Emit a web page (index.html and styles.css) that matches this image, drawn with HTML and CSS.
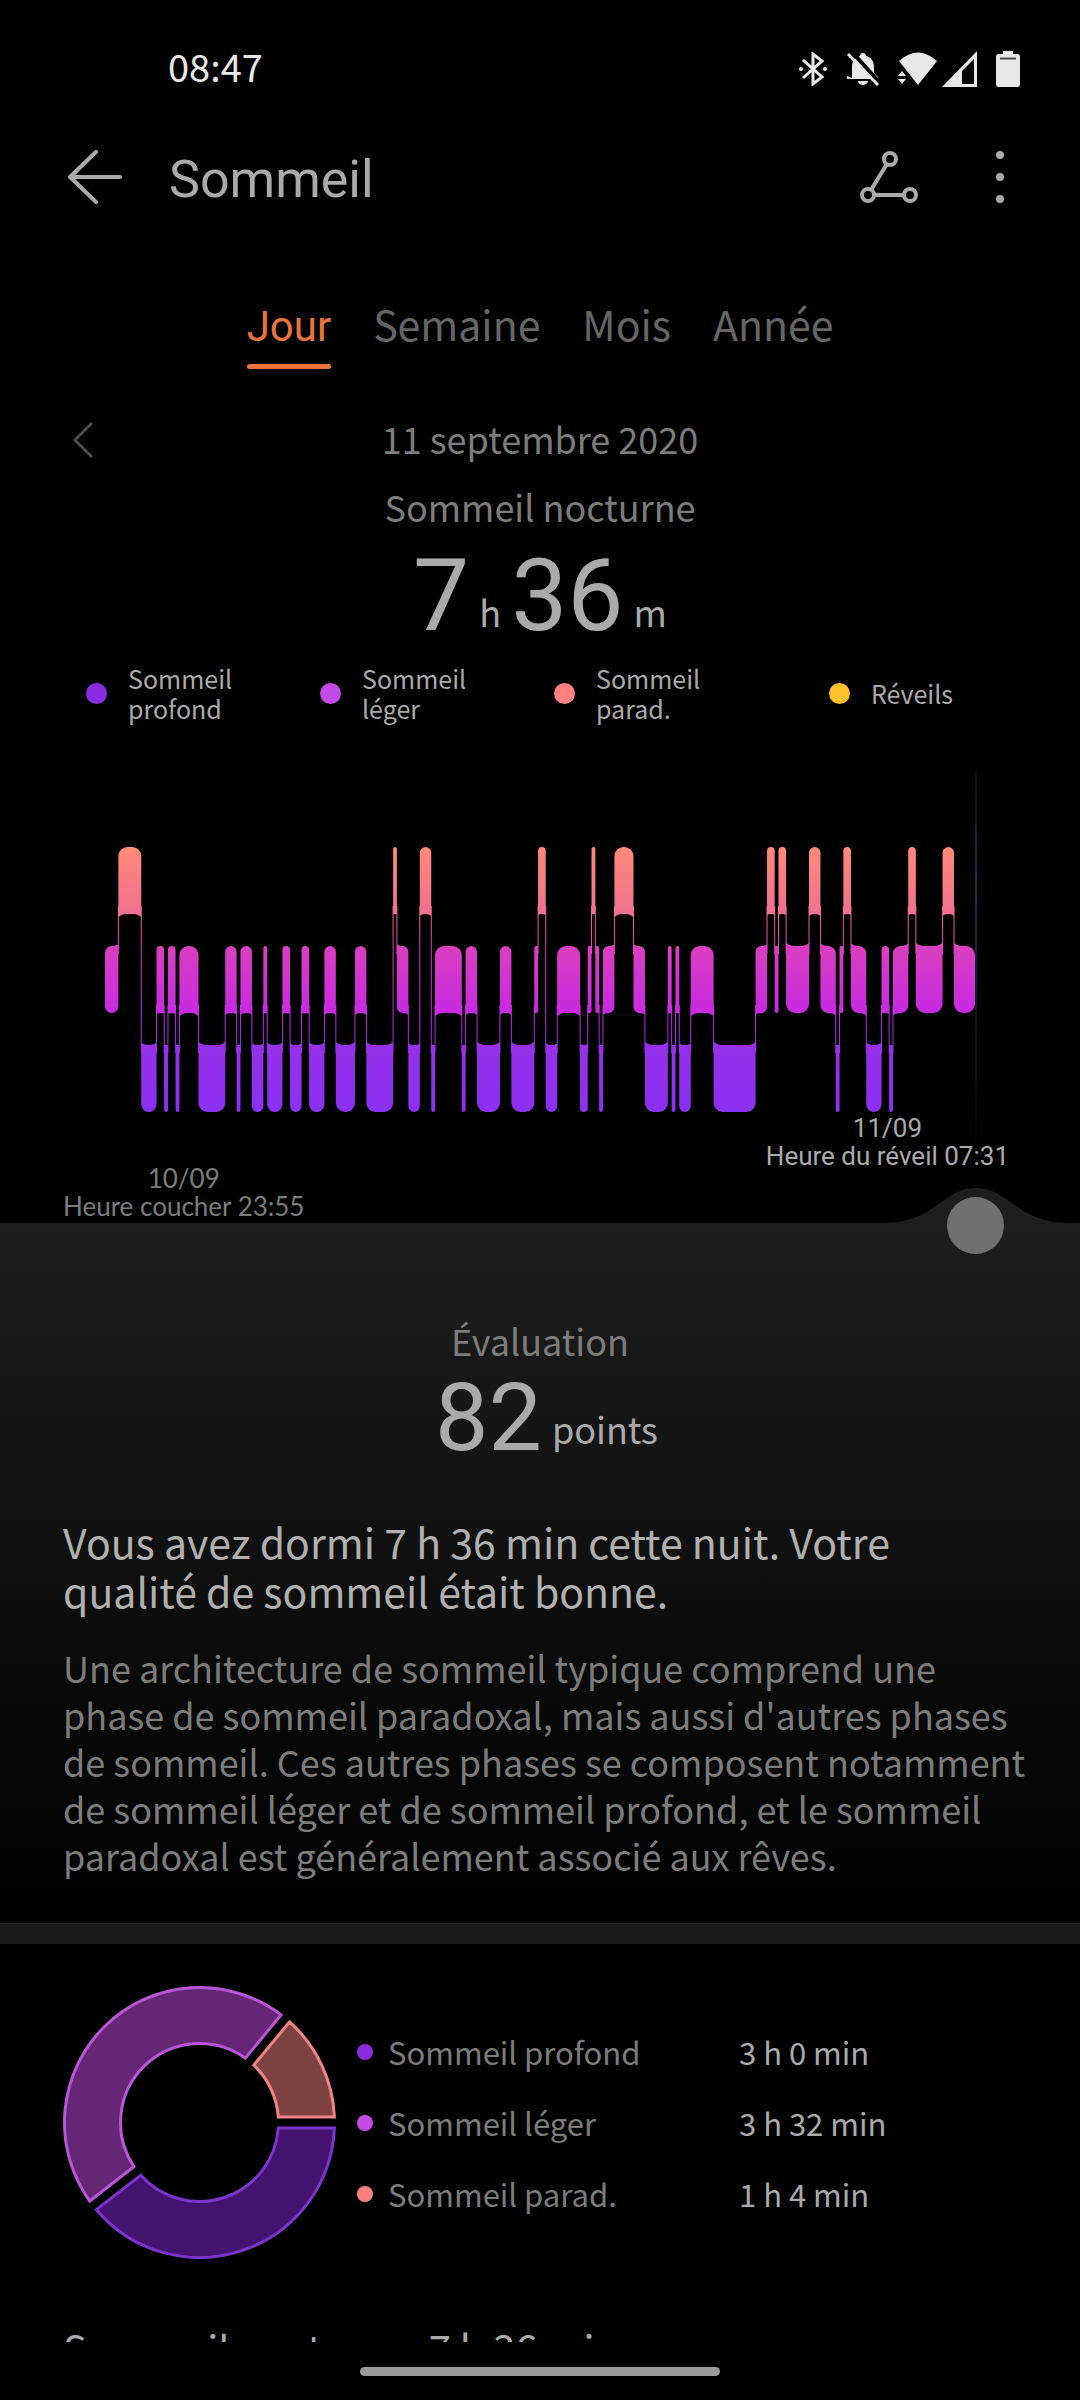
FILE: index.html
```html
<!DOCTYPE html>
<html lang="fr">
<head>
<meta charset="UTF-8">
<meta name="viewport" content="width=device-width, initial-scale=1">
<title>Sommeil</title>
<link rel="stylesheet" href="styles.css">
</head>
<body>

<!-- Barre d'état -->
<div class="status">
  <span class="clock">08:47</span>
  <div class="status-icons">
    <svg class="icon-bt" width="28" height="34" viewBox="0 0 28 34">
      <path d="M4 8l19 17-9 7V2l9 7L4 26" fill="none" stroke="#e8e8e8" stroke-width="3"/>
      <circle cx="2" cy="17" r="2" fill="#e8e8e8"/><circle cx="26" cy="17" r="2" fill="#e8e8e8"/>
    </svg>
    <svg class="icon-bell" width="32" height="34" viewBox="0 0 32 34">
      <path d="M5 26V15C5 8 9 5 13 4c0-4 6-4 6 0 5 1 8 5 8 11v6l4 4v2H0v-3z" fill="#e8e8e8"/>
      <path d="M11 29h10a5 4 0 0 1-10 0z" fill="#e8e8e8"/>
      <path d="M5 0l28 31" stroke="#000" stroke-width="4"/>
      <path d="M1 2l30 31" stroke="#e8e8e8" stroke-width="3"/>
    </svg>
    <svg class="icon-wifi" width="40" height="34" viewBox="0 0 40 34">
      <path d="M1 9Q20-8 39 9L20 33z" fill="#e8e8e8"/>
      <path d="M-1 17h6l7 9v8H-1z" fill="#000"/>
      <path d="M0 24l4-5 4 5zM0 27h8l-4 5z" fill="#e8e8e8"/>
    </svg>
    <svg class="icon-signal" width="35" height="36" viewBox="0 0 35 36">
      <path d="M35 0v36H0zM32 8L20 20v13h12z" fill="#e8e8e8" fill-rule="evenodd"/>
    </svg>
    <svg class="icon-battery" width="24" height="36" viewBox="0 0 24 36">
      <path d="M7 0h10v3h4q3 0 3 3v27q0 3-3 3H3q-3 0-3-3V6q0-3 3-3h4z" fill="#e8e8e8"/>
      <path d="M4 7.500h16" stroke="#444" stroke-width="2"/>
    </svg>
  </div>
</div>

<header class="topbar">
  <button class="icon-btn back" aria-label="Retour">
    <svg width="54" height="54" viewBox="0 0 54 54"><path d="M28 2L2 27l26 25M2 27h50" fill="none" stroke="#aaa" stroke-width="4" stroke-linecap="round" stroke-linejoin="round"/></svg>
  </button>
  <h1>Sommeil</h1>
  <button class="icon-btn share" aria-label="Partager">
    <svg width="60" height="54" viewBox="0 0 60 54" fill="none" stroke="#aaa" stroke-width="4">
      <circle cx="31" cy="9" r="6"/><circle cx="9" cy="45" r="6"/><circle cx="51" cy="45" r="6"/>
      <path d="M28 14L12 40M15 45h30"/>
    </svg>
  </button>
  <button class="icon-btn more" aria-label="Plus d'options">
    <svg width="8" height="54" viewBox="0 0 8 54" fill="#aaa"><circle cx="4" cy="5" r="4"/><circle cx="4" cy="27" r="4"/><circle cx="4" cy="49" r="4"/></svg>
  </button>
</header>

<main>
  <nav class="tabs">
    <a href="#jour" class="active">Jour</a>
    <a href="#semaine">Semaine</a>
    <a href="#mois">Mois</a>
    <a href="#annee">Année</a>
  </nav>

  <div class="date-row">
    <button class="icon-btn prev" aria-label="Jour précédent">
      <svg width="22" height="38" viewBox="0 0 22 38"><path d="M20 2L3 19l17 17" fill="none" stroke="#4c4c4c" stroke-width="3"/></svg>
    </button>
    <span class="date">11 septembre 2020</span>
  </div>

  <p class="caption night">Sommeil nocturne</p>
  <p class="big">7<span class="unit">h</span>36<span class="unit">m</span></p>

  <ul class="legend">
    <li><i class="dot deep"></i><span>Sommeil profond</span></li>
    <li><i class="dot light"></i><span>Sommeil léger</span></li>
    <li><i class="dot rem"></i><span>Sommeil parad.</span></li>
    <li><i class="dot awake"></i><span>Réveils</span></li>
  </ul>

  <!-- Hypnogramme -->
  <section class="chart">
    <svg class="plot" viewBox="0 0 870 341" preserveAspectRatio="none">
      <defs>
        <linearGradient id="stage" gradientUnits="userSpaceOnUse" x1="0" y1="76" x2="0" y2="341">
          <stop offset="0" stop-color="#ff8a78"/>
          <stop offset=".25" stop-color="#f0708f"/>
          <stop offset=".38" stop-color="#da3fc0"/>
          <stop offset=".62" stop-color="#c82ae2"/>
          <stop offset=".75" stop-color="#9630ea"/>
          <stop offset="1" stop-color="#8c30f3"/>
        </linearGradient>
        <linearGradient id="cursor" gradientUnits="userSpaceOnUse" x1="0" y1="0" x2="0" y2="380">
          <stop offset="0" stop-color="#2a2650" stop-opacity=".3"/>
          <stop offset=".3" stop-color="#2a2650"/>
          <stop offset="1" stop-color="#2a2650" stop-opacity="0"/>
        </linearGradient>
      </defs>
      <path id="stages" fill="url(#stage)"/>
      <rect x="870" y="0" width="2" height="380" fill="url(#cursor)"/>
    </svg>
    <div class="times">
      <p class="bed">10/09<br>Heure coucher 23:55</p>
      <p class="wake">11/09<br>Heure du réveil 07:31</p>
    </div>
    <svg class="hump" width="208" height="35" viewBox="0 0 208 35">
      <path d="M10 35C65 35 70 0 104 0S143 35 198 35z" fill="#1e1e1e"/>
    </svg>
    <input class="scrub" type="range" min="0" max="456" value="456" aria-label="Heure">
  </section>

  <section class="score">
    <p class="caption">Évaluation</p>
    <p class="big">82<span class="unit">points</span></p>
    <h2>Vous avez dormi 7 h 36 min cette nuit. Votre qualité de sommeil était bonne.</h2>
    <p class="text">Une architecture de sommeil typique comprend une phase de sommeil paradoxal, mais aussi d'autres phases de sommeil. Ces autres phases se composent notamment de sommeil léger et de sommeil profond, et le sommeil paradoxal est généralement associé aux rêves.</p>
  </section>

  <section class="breakdown">
    <svg id="donut" width="273" height="273" viewBox="0 0 273 273"></svg>
    <table>
      <tr><th scope="row"><i class="dot deep"></i>Sommeil profond</th><td>3 h 0 min</td></tr>
      <tr><th scope="row"><i class="dot light"></i>Sommeil léger</th><td>3 h 32 min</td></tr>
      <tr><th scope="row"><i class="dot rem"></i>Sommeil parad.</th><td>1 h 4 min</td></tr>
    </table>
  </section>

  <h3 class="total"><span>Sommeil nocturne</span><span>7 h 36 min</span></h3>
</main>

<div class="navbar"><div class="pill"></div></div>

<script src="script.js"></script>
</body>
</html>
```
FILE: styles.css
```css
*{box-sizing:border-box;}
body{
  margin:0;height:100vh;display:flex;flex-direction:column;
  background:#000;color:#aaa;
  font-family:"Noto Sans CJK SC", "Noto Sans", sans-serif;font-size:36px;
}
h1,h2,h3,p,ul{margin:0;padding:0;font-weight:400;}
svg{display:block;flex:none;}
a{color:inherit;text-decoration:none;}
.icon-btn{background:none;border:0;padding:0;flex:none;}

/* status */
.status{display:flex;justify-content:space-between;align-items:center;height:132px;flex:none;padding:0 60px 0 168px;}
.clock{color:#e8e8e8;font-size:38px;line-height:54px;}
.status-icons{display:flex;align-items:center;padding-top:6px;}
.icon-bell{margin-left:20px;}
.icon-wifi{margin-left:19px;}
.icon-signal{margin-left:4px;}
.icon-battery{margin-left:19px;}

/* header */
.topbar{display:flex;align-items:center;height:90px;flex:none;padding:0 76px 0 68px;}
.topbar h1{flex:1;padding-left:47px;font-family:Roboto, sans-serif;font-size:52px;line-height:84px;padding-top:6px;}
.more{margin-left:77px;}

main{flex:1;min-height:0;overflow:hidden;}

.tabs{display:flex;justify-content:center;align-items:baseline;gap:42px;padding-top:71px;font-size:41px;line-height:60px;color:#666;}
.tabs a{position:relative;}
.tabs .active{color:#e8743b;font-family:Roboto, sans-serif;font-size:42px;}
.tabs .active::after{content:"";position:absolute;left:0;right:0;bottom:-12px;height:5px;border-radius:3px;background:#e8743b;}

.date-row{display:flex;align-items:center;margin-top:54px;padding:0 72px;line-height:54px;color:#7c7c7c;}
.prev{padding-top:4px;}
.date{flex:1;text-align:center;padding-right:22px;}

.caption{text-align:center;line-height:54px;color:#7c7c7c;}
.night{margin:14px 0 12px;}
.big{
  display:flex;justify-content:center;align-items:flex-end;
  font-family:Roboto, sans-serif;font-size:100px;line-height:102px;
}
.unit{font-family:"Noto Sans CJK SC", sans-serif;font-size:36px;line-height:72px;padding:0 10px;}
.unit:last-child{padding-right:0;}

.legend{display:flex;list-style:none;margin-top:16px;padding:0 72px;font-size:25px;line-height:30px;}
.legend li{flex:1;display:flex;align-items:center;justify-content:center;padding:0 14px;}
.dot{display:inline-block;flex:none;width:21px;height:21px;border-radius:50%;margin-right:21px;}
.deep{background:#8b2be2;}
.light{background:#c44ae6;}
.rem{background:#ff8080;}
.awake{background:#fcc02b;}

/* chart */
.chart{position:relative;margin-top:48px;}
.plot{width:calc(100% - 210px);height:341px;margin:0 105px;overflow:visible;}
.times{display:flex;justify-content:space-between;height:111px;padding:2px 71px 3px 63px;font-size:26px;line-height:28px;text-align:center;}
.bed{align-self:flex-end;color:#7c7c7c;font-family:Lato, sans-serif;}
.wake{font-family:Roboto, sans-serif;}
.hump{position:absolute;right:0;bottom:0;}
.scrub{
  position:absolute;left:76px;bottom:-31px;height:57px;margin:0;
  width:calc(100% - 152px);appearance:none;background:none;
}
.scrub::-webkit-slider-thumb{appearance:none;width:57px;height:57px;border-radius:50%;background:#707070;}

/* score */
.score{padding:90px 50px 44px 63px;background:linear-gradient(#1e1e1e, #000);}
.score .caption{margin-right:13px;}
.score .big{font-size:95px;}
.score .unit{line-height:82px;}
.score h2{margin-top:48px;font-size:41px;line-height:49px;color:#b0b0b0;}
.text{margin-top:29px;line-height:47px;color:#7c7c7c;}

/* breakdown */
.breakdown{display:flex;align-items:center;padding:42px 63px 0;border-top:21px solid #1b1b1b;}
.breakdown table{margin-left:21px;border-spacing:0;font-size:31px;line-height:71px;}
.breakdown th,.breakdown td{padding:0;text-align:left;font-weight:400;white-space:nowrap;}
.breakdown th{width:382px;color:#7c7c7c;}
.breakdown .dot{width:16px;height:16px;margin-right:15px;vertical-align:5px;}

.total{display:flex;gap:20px;margin-top:59px;padding:0 63px;font-size:40px;line-height:60px;}

.navbar{height:58px;flex:none;display:flex;justify-content:center;padding-top:25px;}
.pill{width:360px;height:9px;border-radius:5px;background:#9a9a9a;}
```
FILE: script.js
```js
// nuit : phase + durée en minutes (R = paradoxal, L = léger, D = profond)
const night = ('L7 R12 D8 L4 D2 L4 D2 L10 D14 L6 D2 L6 D6 L2 D8 L4 D6 L4 D8 L6 D10 L6 D14 R2 L6 D6 R6 D2 ' +
  'L14 D2 L6 D12 L6 D12 L2 R4 D6 L12 D4 L2 R2 L2 D2 L6 R10 L6 D12 L2 D2 L2 D6 L12 D22 L6 R4 L2 R4 L12 R6 ' +
  'L8 D2 L2 R4 L8 D8 L4 D2 L8 R4 L14 R6 L11').split(' ').map(s => ({ stage: s[0], min: +s.slice(1) }));

const TOP = { R: 76, L: 175, D: 274 };
const H = 67;
const scale = 870 / 456;

function drawStages(){
  let x = 0;
  let d = '';
  night.forEach((seg, i) => {
    const l = x, r = x + seg.min * scale;
    const t = TOP[seg.stage], b = t + H;
    const prev = night[i-1] ? TOP[night[i-1].stage] : t;
    const next = night[i+1] ? TOP[night[i+1].stage] : t;
    const c = Math.min(9, (r - l) / 2);  // arrondi
    const f = c * 0.5;                   // raccord vers la phase voisine
    // coin : évasé côté voisin, arrondi sinon
    const tl = prev < t ? -f : c, bl = prev > t ? -f : c;
    const tr = next < t ? -f : c, br = next > t ? -f : c;
    const arc = (k, px, py) => `A${c} ${Math.abs(k)} 0 0 ${k > 0 ? 1 : 0} ${px} ${py}`;
    d += `M${l} ${t+tl}${arc(tl, l+c, t)}H${r-c}${arc(tr, r, t+tr)}` +
         `V${b-br}${arc(br, r-c, b)}H${l+c}${arc(bl, l, b-bl)}Z`;
    if (night[i+1]) {
      const y1 = Math.min(t, next) + H - 8, y2 = Math.max(t, next) + 8;
      d += `M${r-.5} ${y1}h1V${y2}h-1Z`;
    }
    x = r;
  });
  document.getElementById('stages').setAttribute('d', d);
}

function drawDonut(){
  const parts = [
    { min: 180, fill: '#45136f', line: '#7c35cc' },
    { min: 212, fill: '#652775', line: '#b955d6' },
    { min: 64,  fill: '#7f4242', line: '#f08484' }
  ];
  const C = 136.5, R = 135, r = 79, gap = 5.5;
  const pt = (rad, ang) => (C + rad * Math.cos(ang)).toFixed(2) + ' ' + (C + rad * Math.sin(ang)).toFixed(2);
  const go = Math.asin(gap / R), gi = Math.asin(gap / r);
  let a = 0;
  document.getElementById('donut').innerHTML = parts.map(p => {
    const e = a + p.min / 456 * 2 * Math.PI;
    const d = `M${pt(R, a+go)}A${R} ${R} 0 0 1 ${pt(R, (a+e)/2)}A${R} ${R} 0 0 1 ${pt(R, e-go)}` +
              `L${pt(r, e-gi)}A${r} ${r} 0 0 0 ${pt(r, (a+e)/2)}A${r} ${r} 0 0 0 ${pt(r, a+gi)}Z`;
    a = e;
    return `<path d="${d}" fill="${p.fill}" stroke="${p.line}" stroke-width="3"/>`;
  }).join('');
}

drawStages();
drawDonut();
```
